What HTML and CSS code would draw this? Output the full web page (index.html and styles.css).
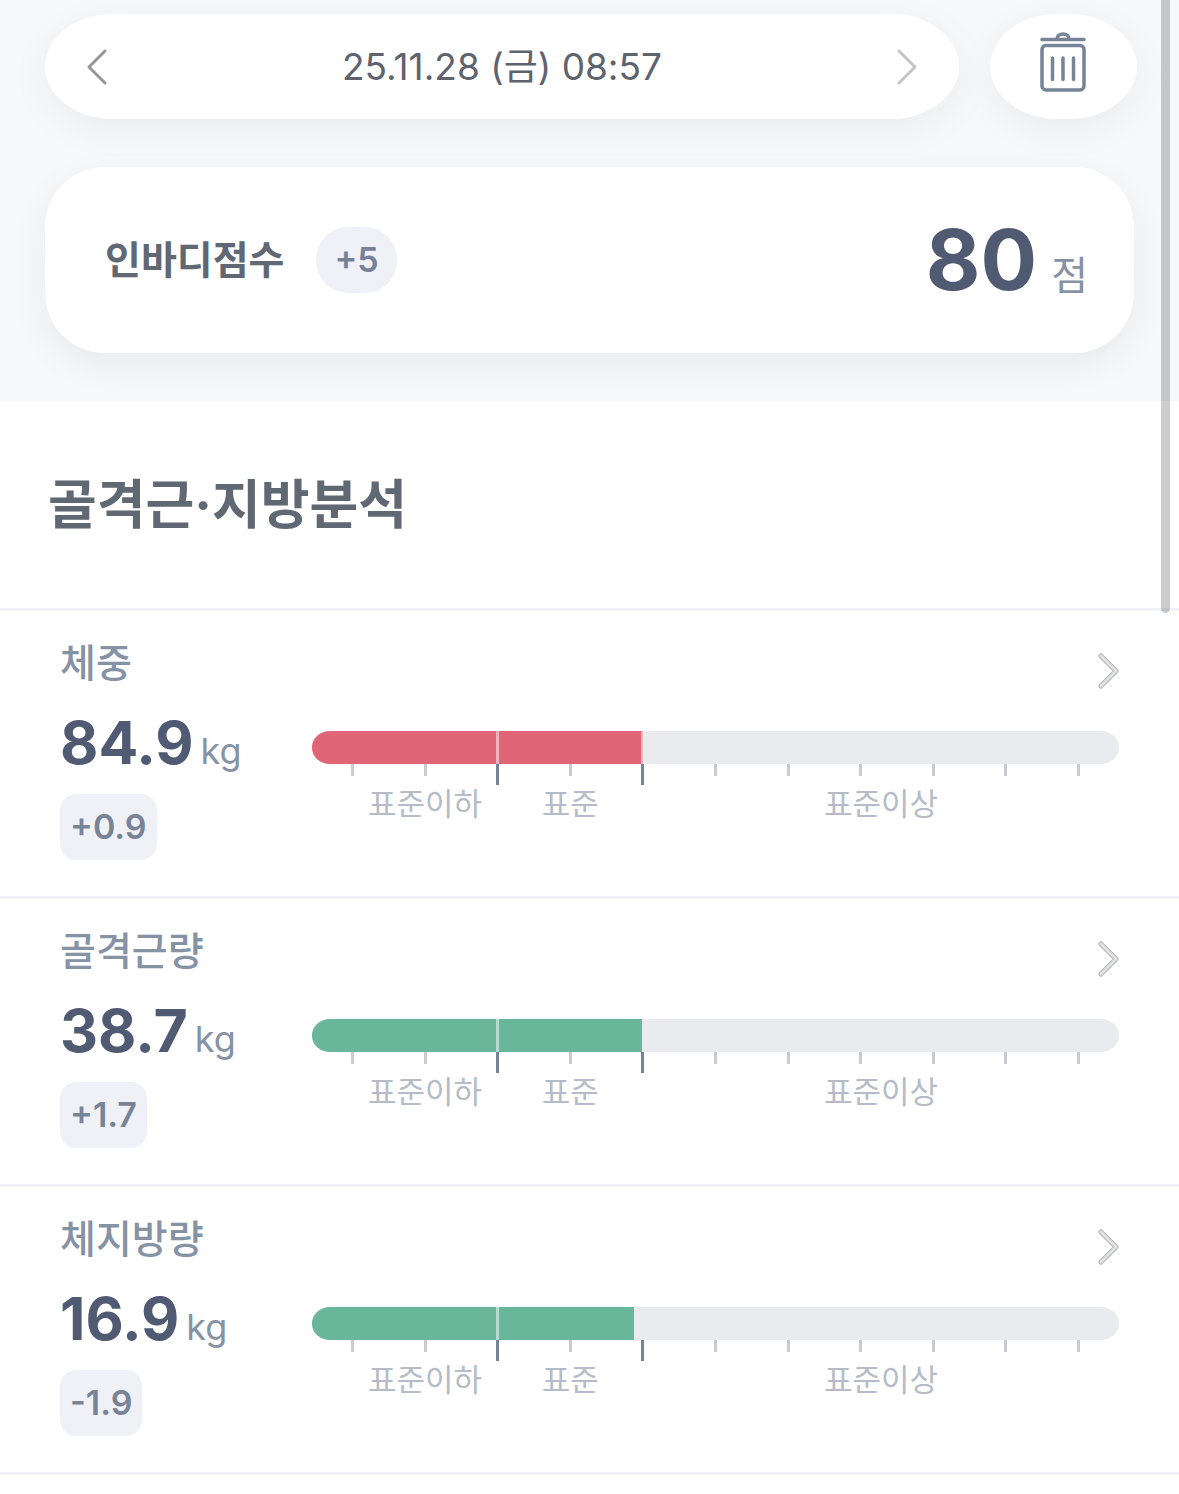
FILE: index.html
```
<!DOCTYPE html>
<html lang="ko">
<head>
    <meta charset="UTF-8">
    <meta name="viewport" content="width=device-width, initial-scale=1.0">
    <title>골격근·지방분석</title>
    <link rel="stylesheet" href="styles.css">
</head>
<body>
    <header class="top">
        <div class="toolbar">
            <nav class="date-nav">
                <button type="button" class="icon-btn prev" aria-label="이전">
                    <svg width="22" height="38" viewBox="0 0 22 38"><path d="M19 3L3 19l16 16"/></svg>
                </button>
                <span class="date">25.11.28 (금) 08:57</span>
                <button type="button" class="icon-btn next" aria-label="다음">
                    <svg width="22" height="38" viewBox="0 0 22 38"><path d="M3 3l16 16L3 35"/></svg>
                </button>
            </nav>
            <button type="button" class="delete-btn" aria-label="삭제">
                <svg width="48" height="60" viewBox="0 0 48 60">
                    <path d="M2 7.500h42M17 7a6 5 0 0 1 12 0"/>
                    <rect x="2" y="13.500" width="42" height="44.500" rx="4"/>
                    <path d="M12.500 26v21.500M23 26v21.500M33.500 26v21.500"/>
                </svg>
            </button>
        </div>

        <section class="score">
            <h2>인바디점수</h2>
            <span class="score-diff">+5</span>
            <p class="score-value"><strong>80</strong><span>점</span></p>
        </section>
    </header>

    <main>
        <h1>골격근·지방분석</h1>

        <ul class="items">
            <li class="item">
                <h3>체중</h3>
                <a href="#" class="more" aria-label="체중 상세">
                    <svg width="22" height="38" viewBox="0 0 22 38"><path class="edge" d="M4 4l15 15L4 34"/><path d="M4 4l15 15L4 34"/></svg>
                </a>
                <div class="value">
                    <p><strong>84.9</strong><span>kg</span></p>
                    <span class="diff">+0.9</span>
                </div>
                <div class="gauge">
                    <div class="bar"><div class="fill over" style="width: 41%"></div><i class="mark low"></i><i class="mark high"></i></div>
                    <div class="ticks"><i></i><i></i><i class="long"></i><i></i><i class="long"></i><i></i><i></i><i></i><i></i><i></i><i></i></div>
                    <div class="ranges"><span>표준이하</span><span>표준</span><span>표준이상</span></div>
                </div>
            </li>

            <li class="item">
                <h3>골격근량</h3>
                <a href="#" class="more" aria-label="골격근량 상세">
                    <svg width="22" height="38" viewBox="0 0 22 38"><path class="edge" d="M4 4l15 15L4 34"/><path d="M4 4l15 15L4 34"/></svg>
                </a>
                <div class="value">
                    <p><strong>38.7</strong><span>kg</span></p>
                    <span class="diff">+1.7</span>
                </div>
                <div class="gauge">
                    <div class="bar"><div class="fill" style="width: 40.900%"></div><i class="mark low"></i></div>
                    <div class="ticks"><i></i><i></i><i class="long"></i><i></i><i class="long"></i><i></i><i></i><i></i><i></i><i></i><i></i></div>
                    <div class="ranges"><span>표준이하</span><span>표준</span><span>표준이상</span></div>
                </div>
            </li>

            <li class="item">
                <h3>체지방량</h3>
                <a href="#" class="more" aria-label="체지방량 상세">
                    <svg width="22" height="38" viewBox="0 0 22 38"><path class="edge" d="M4 4l15 15L4 34"/><path d="M4 4l15 15L4 34"/></svg>
                </a>
                <div class="value">
                    <p><strong>16.9</strong><span>kg</span></p>
                    <span class="diff">-1.9</span>
                </div>
                <div class="gauge">
                    <div class="bar"><div class="fill" style="width: 39.900%"></div><i class="mark low"></i></div>
                    <div class="ticks"><i></i><i></i><i class="long"></i><i></i><i class="long"></i><i></i><i></i><i></i><i></i><i></i><i></i></div>
                    <div class="ranges"><span>표준이하</span><span>표준</span><span>표준이상</span></div>
                </div>
            </li>
        </ul>
    </main>

    <div class="scroll-thumb"></div>
</body>
</html>
```
FILE: styles.css
```
* {
    box-sizing: border-box;
}
body {
    margin: 0;
    position: relative;
    background: #fff;
    font-family: Inter, "Noto Sans CJK KR", sans-serif;
    color: #5f6873;
}
h1, h2, h3, p, ul {
    margin: 0;
    padding: 0;
}
button {
    border: none;
    padding: 0;
    background: none;
    cursor: pointer;
}
svg {
    display: block;
    fill: none;
    stroke-linecap: round;
    stroke-linejoin: round;
}

/* top area */
.top {
    padding: 14px 45px 48px;
    background: #f7f8fa;
}
.toolbar {
    display: flex;
    gap: 31px;
    height: 105px;
    margin-right: -3px;
}
.date-nav, .delete-btn {
    background: #fff;
    border-radius: 68px / 53px;
    box-shadow: 0 10px 40px rgba(0, 0, 0, 0.05);
}
.date-nav {
    flex: 1;
    display: flex;
    align-items: center;
    justify-content: space-between;
    padding: 0 41px;
}
.icon-btn svg {
    stroke: #969696;
    stroke-width: 3;
}
.next svg {
    stroke: #c4c4c4;
}
.date {
    font-size: 37px;
    line-height: 44px;
    color: #5f636e;
}
.delete-btn {
    width: 147px;
    display: flex;
    justify-content: center;
    padding-top: 18px;
}
.delete-btn svg {
    stroke: #778397;
    stroke-width: 3.500;
}

.score {
    display: flex;
    align-items: center;
    height: 186px;
    margin-top: 48px;
    padding: 0 46px 0 60px;
    background: #fff;
    border-radius: 60px;
    box-shadow: 0 12px 36px rgba(0, 0, 0, 0.06);
}
.score h2 {
    font-size: 39px;
    font-weight: 700;
    line-height: 60px;
}
.score-diff {
    height: 66px;
    margin-left: 32px;
    padding: 0 18px;
    border-radius: 32px;
    background: #f0f1f6;
    font-size: 34px;
    font-weight: 600;
    line-height: 66px;
    color: #778199;
}
.score-value {
    display: flex;
    align-items: baseline;
    gap: 14px;
    height: 100px;
    margin-left: auto;
    line-height: 100px;
}
.score-value strong {
    font-size: 84px;
    color: #505b73;
}
.score-value span {
    font-size: 40px;
    color: #8693a5;
}

/* analysis list */
h1 {
    padding: 64px 48px 63px;
    font-size: 53px;
    line-height: 80px;
}
.items {
    list-style: none;
    border-top: 3px solid #f2f3f8;
}
.item {
    display: grid;
    grid-template-columns: 252px 1fr;
    grid-template-rows: 72px auto;
    padding: 24px 60px 36px;
    border-bottom: 3px solid #f2f3f8;
}
.item h3 {
    font-size: 39px;
    font-weight: 500;
    line-height: 56px;
    color: #8693a5;
}
.more {
    display: flex;
    align-items: center;
    justify-self: end;
}
.more svg {
    stroke: #e0e1e3;
    stroke-width: 3;
}
.more .edge {
    stroke: #b4b4b4;
    stroke-width: 5;
}
.value p {
    display: flex;
    align-items: baseline;
    gap: 7px;
    height: 72px;
    line-height: 72px;
}
.value strong {
    font-size: 59px;
    color: #505b73;
}
.value p span {
    font-size: 36px;
    color: #8693a5;
}
.diff {
    display: inline-block;
    margin-top: 15px;
    padding: 0 10px;
    border-radius: 16px;
    background: #f0f1f6;
    font-size: 34px;
    font-weight: 600;
    line-height: 66px;
    color: #778397;
    vertical-align: top;
}

/* gauge */
.gauge {
    padding-top: 24px;
}
.bar {
    position: relative;
    height: 33px;
    border-radius: 18px / 16px;
    background: #eaebef;
    overflow: hidden;
}
.fill {
    height: 100%;
    background: #69b69a;
}
.fill.over {
    background: #e06576;
}
.mark {
    position: absolute;
    top: 0;
    width: 3px;
    height: 100%;
    margin-left: -2px;
    background: rgba(255, 255, 255, 0.5);
}
.mark.low {
    left: 23%;
}
.mark.high {
    left: 41%;
}
.ticks {
    display: flex;
    justify-content: space-between;
    height: 21px;
    margin: 0 calc(5% - 1px);
}
.ticks i {
    width: 3px;
    height: 12px;
    background: #c9cbd0;
}
.ticks .long {
    height: 21px;
    background: #778397;
}
.ranges {
    display: grid;
    grid-template-columns: 18fr 18fr 59fr;
    padding-left: 5%;
    font-size: 31px;
    line-height: 38px;
    text-align: center;
    color: #b5bcc7;
}

/* scroll indicator */
.scroll-thumb {
    position: absolute;
    top: 0;
    right: 9px;
    width: 9px;
    height: 613px;
    border-radius: 0 0 5px 5px;
    background: rgba(0, 0, 0, 0.2);
}
```
